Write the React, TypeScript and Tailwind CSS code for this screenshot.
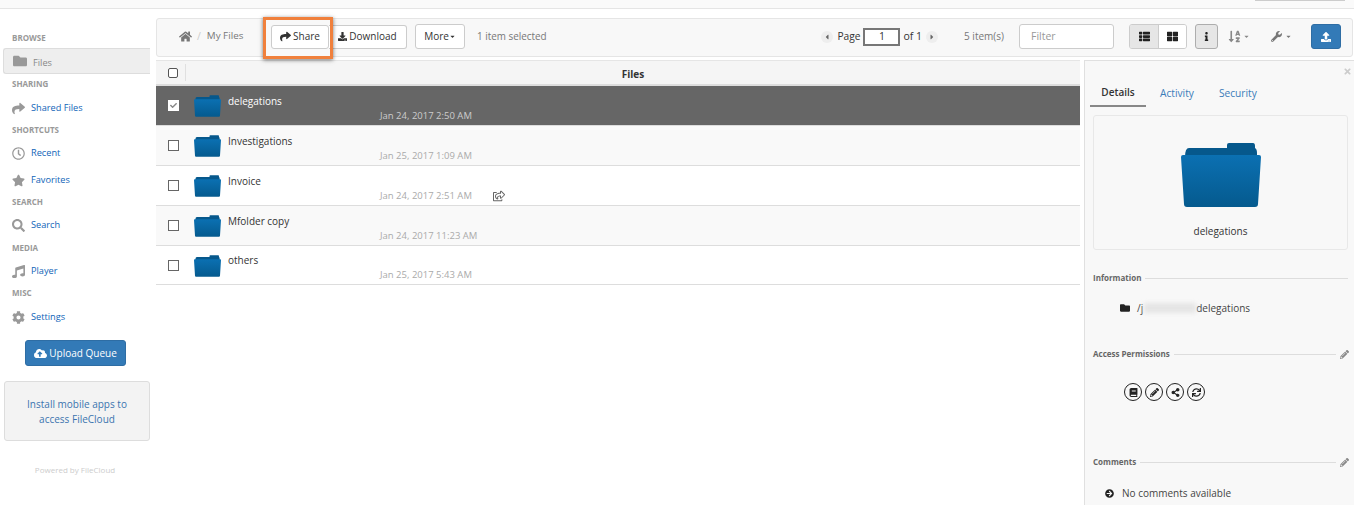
import React from "react";
import { FaHome, FaFolder, FaShare, FaRegClock, FaStar, FaSearch, FaMusic, FaCog, FaCloudUploadAlt, FaDownload, FaCaretDown, FaCaretLeft, FaCaretRight, FaThList, FaThLarge, FaInfo, FaSortAlphaDown, FaWrench, FaUpload, FaPencilAlt, FaShareAlt, FaSync, FaBook, FaCheck, FaTimes, FaRegShareSquare, FaArrowCircleRight } from "react-icons/fa";

function Folder({ className, id }: { className: string; id: string }) {
  return (
    <svg viewBox="0 0 80 64" className={className}>
      <defs>
        <linearGradient id={id} x1="0" y1="0" x2="0" y2="1">
          <stop offset="0" stopColor="#0b70b2" />
          <stop offset="1" stopColor="#055a8e" />
        </linearGradient>
      </defs>
      <path d="M4 14 Q4 5 8 5 H46 V2 Q46 0 48 0 H72 Q74 0 74 3 V5 Q76 6 76 10 V16 H4Z" fill="#06588c" />
      <path d="M0 14 Q0 12 2 12 H78 Q80 12 80 14 L77 61 Q77 64 74 64 H6 Q3 64 3 61Z" fill={`url(#${id})`} />
    </svg>
  );
}

function Label({ children, className = "" }: { children: React.ReactNode; className?: string }) {
  return <div className={`pl-3 text-[8px] leading-[10px] font-bold text-[#999] ${className}`}>{children}</div>;
}

function NavItem({ icon, label, className = "" }: { icon: React.ReactNode; label: string; className?: string }) {
  return (
    <div className={`flex items-center h-[26px] pl-3 ${className}`}>
      <span className="w-[19px] text-[13px] text-[#999] flex">{icon}</span>
      <span className="text-[9.2px] text-[#0f64b8]">{label}</span>
    </div>
  );
}

function Row({ name, date, odd, selected, last, shared }: { name: string; date: string; odd?: boolean; selected?: boolean; last?: boolean; shared?: boolean }) {
  const bg = selected ? "bg-[#666666]" : odd ? "bg-[#f9f9f9]" : "bg-white";
  return (
    <div className={`flex ${last ? "h-[39px]" : "h-[40px]"} ${bg} border-b border-[#dddddd] relative`}>
      <div className="w-[30px] flex justify-center items-center pl-[5px]">
        <span className={`w-[11px] h-[11px] border border-[#666] flex items-center justify-center ${selected ? "bg-white border-white" : "bg-white"}`}>
          {selected && <FaCheck className="text-[7px] text-[#888]" />}
        </span>
      </div>
      <div className="w-[8px]" />
      <Folder id={`f-${name.replace(/\s/g, "")}`} className="w-[27px] h-[22px] mt-[9px]" />
      <div className="ml-[7px] flex-1 flex flex-col">
        <div className={`text-[10px] leading-[14px] ${last ? "mt-[7px]" : "mt-[8px]"} ${selected ? "text-white" : "text-[#333]"}`}>{name}</div>
        <div className="flex items-center ml-[152px] mt-[1px]">
          <span className={`text-[9.5px] leading-[14px] ${selected ? "text-[#ccc]" : "text-[#aaa]"}`}>{date}</span>
          {shared && <FaRegShareSquare className="ml-[21px] text-[12px] text-[#666]" />}
        </div>
      </div>
    </div>
  );
}

function Heading({ label, edit, className = "" }: { label: string; edit?: boolean; className?: string }) {
  return (
    <div className={`flex items-center h-[12px] ${className}`}>
      <span className="text-[8px] font-bold text-[#666]">{label}</span>
      <span className="flex-1 h-px bg-[#ddd] ml-[4px]" />
      {edit ? <FaPencilAlt className="text-[9px] text-[#888] ml-[4px]" /> : null}
    </div>
  );
}

function Perm({ icon }: { icon: React.ReactNode }) {
  return <span className="w-[18px] h-[18px] rounded-full border-[1.5px] border-[#222] flex items-center justify-center text-[9px] text-[#222]">{icon}</span>;
}

export default function App() {
  return (
    <div className="w-[1354px] h-[505px] overflow-hidden bg-white font-['Open_Sans',sans-serif] flex flex-col">
      <div className="h-[9px] shrink-0 bg-[#fafafa] border-b border-[#e5e5e5] flex justify-end">
        <div className="w-[90px] h-px bg-[#ccc] mr-[9px]" />
      </div>
      <div className="flex flex-1 min-h-0">
        <aside className="w-[156px] shrink-0 pt-[24px] pr-[6px]">
          <Label>BROWSE</Label>
          <div className="ml-[3px] mt-[5px] h-[26px] flex items-center pl-[9px] bg-[#eeeeee] border border-r-0 border-[#dddddd] rounded-l-[3px]">
            <FaFolder className="text-[14px] text-[#999] mr-[6px]" />
            <span className="text-[9.2px] text-[#888] pt-[3px]">Files</span>
          </div>
          <Label className="mt-[5px]">SHARING</Label>
          <NavItem icon={<FaShare />} label="Shared Files" className="mt-[6px]" />
          <Label className="mt-[4px]">SHORTCUTS</Label>
          <NavItem icon={<FaRegClock />} label="Recent" className="mt-[5px]" />
          <NavItem icon={<FaStar />} label="Favorites" className="mt-[1px]" />
          <Label className="mt-[4px]">SEARCH</Label>
          <NavItem icon={<FaSearch />} label="Search" className="mt-[5px]" />
          <Label className="mt-[5px]">MEDIA</Label>
          <NavItem icon={<FaMusic />} label="Player" className="mt-[5px]" />
          <Label className="mt-[4px]">MISC</Label>
          <NavItem icon={<FaCog />} label="Settings" className="mt-[6px]" />
          <div className="flex justify-center mt-[10px]">
            <button className="ml-[1px] w-[101px] h-[26px] rounded-[3px] bg-[#337ab7] border border-[#2e6da4] text-white text-[10px] flex items-center justify-center gap-[2px]">
              <FaCloudUploadAlt className="text-[13px]" />
              Upload Queue
            </button>
          </div>
          <div className="ml-[4px] mt-[15px] h-[60px] pt-[2px] bg-[#f3f3f3] border border-[#dddddd] rounded-[3px] flex items-center justify-center text-center text-[10px] leading-[15px] text-[#3b73af] px-4">
            Install mobile apps to access FileCloud
          </div>
          <div className="mt-[24px] text-center text-[8px] leading-[10px] text-[#ccc]">Powered by FileCloud</div>
        </aside>
        <main className="flex-1 min-w-0 pt-[9px] flex flex-col">
          <div className="h-[39px] shrink-0 mr-[1px] pb-[2px] bg-[#f8f8f8] border border-[#e5e5e5] rounded-[3px] flex items-center">
            <div className="w-[114px] shrink-0 flex items-center pl-[22px]">
              <FaHome className="text-[13px] text-[#777]" />
              <span className="ml-[5px] text-[10.5px] text-[#ccc]">/</span>
              <span className="ml-[6px] text-[9.8px] text-[#777]">My Files</span>
            </div>
            <button className="relative w-[58px] h-[24px] bg-white border border-[#ccc] rounded-[3px] text-[10px] text-[#333] flex items-center justify-center gap-[2px]">
              <FaShare className="text-[11px]" />
              Share
              <span className="absolute -left-[9px] -top-[9px] w-[70px] h-[42px] border-[3px] border-[#f0803c] shadow-[0_1px_4px_rgba(0,0,0,0.55)]" />
            </button>
            <button className="w-[78px] h-[24px] bg-white border border-[#ccc] border-l-0 rounded-r-[3px] text-[10px] text-[#333] flex items-center justify-center gap-[2px]">
              <FaDownload className="text-[9px]" />
              Download
            </button>
            <button className="ml-[8px] w-[50px] h-[25px] bg-white border border-[#ccc] rounded-[3px] text-[10px] text-[#333] flex items-center justify-center">
              More
              <FaCaretDown className="text-[7px]" />
            </button>
            <span className="ml-[12px] text-[9.9px] text-[#777]">1 item selected</span>
            <span className="flex-1" />
            <span className="w-[12px] h-[12px] rounded-full bg-[#eee] flex items-center justify-center text-[8px] text-[#666]"><FaCaretLeft /></span>
            <span className="ml-[4px] text-[10.2px] text-[#333]">Page</span>
            <span className="ml-[3px] w-[37px] h-[18px] bg-white border-2 border-[#777] flex items-center justify-center text-[10.5px] text-[#333]">1</span>
            <span className="ml-[3px] text-[10.5px] text-[#333]">of 1</span>
            <span className="ml-[4px] w-[12px] h-[12px] rounded-full bg-[#eee] flex items-center justify-center text-[8px] text-[#666]"><FaCaretRight /></span>
            <span className="ml-[26px] text-[10px] text-[#777]">5 item(s)</span>
            <span className="ml-[15px] w-[95px] h-[25px] bg-white border border-[#ccc] rounded-[3px] flex items-center pl-[11px] text-[10.5px] text-[#999]">Filter</span>
            <div className="ml-[15px] flex h-[25px] w-[58px] border border-[#ccc] rounded-[3px] overflow-hidden">
              <span className="w-[29px] bg-[#e6e6e6] border-r border-[#ccc] flex items-center justify-center text-[11px] text-[#222]"><FaThList /></span>
              <span className="flex-1 bg-white flex items-center justify-center text-[11px] text-[#222]"><FaThLarge /></span>
            </div>
            <span className="ml-[8px] w-[23px] h-[25px] bg-[#e6e6e6] border border-[#adadad] rounded-[3px] flex items-center justify-center text-[9px] text-[#222]"><FaInfo /></span>
            <span className="ml-[10px] w-[22px] flex items-center text-[#888] text-[13px]"><FaSortAlphaDown /><FaCaretDown className="text-[7px] ml-[2px]" /></span>
            <span className="ml-[21px] w-[22px] flex items-center text-[#777] text-[11px]"><FaWrench /><FaCaretDown className="text-[7px] ml-[3px]" /></span>
            <span className="ml-[18px] w-[30px] h-[25px] bg-[#337ab7] border border-[#2e6da4] rounded-[3px] flex items-center justify-center text-[10px] text-white"><FaUpload /></span>
            <span className="w-[11px]" />
          </div>
          <div className="flex flex-1 mt-[3px] min-h-0">
            <section className="w-[924px] shrink-0">
              <div className="flex h-[26px] bg-[#f5f5f5] border-t border-[#e5e5e5] border-b-2 border-b-[#dddddd]">
                <div className="w-[30px] border-r border-[#e0e0e0] my-[3px] pl-[4px] flex items-center justify-center">
                  <span className="w-[10px] h-[10px] bg-white border border-[#555] rounded-[2px]" />
                </div>
                <div className="flex-1 text-center text-[10px] font-bold text-[#333] leading-[26px]">Files</div>
              </div>
              <Row name="delegations" date="Jan 24, 2017 2:50 AM" selected />
              <Row name="Investigations" date="Jan 25, 2017 1:09 AM" odd />
              <Row name="Invoice" date="Jan 24, 2017 2:51 AM" shared />
              <Row name="Mfolder copy" date="Jan 24, 2017 11:23 AM" odd />
              <Row name="others" date="Jan 25, 2017 5:43 AM" last />
            </section>
            <section className="ml-[4px] flex-1 min-w-0 bg-[#f8f8f8] border-l border-t border-[#e0e0e0] px-[8px] relative">
              <FaTimes className="absolute right-[2px] top-[6px] text-[9px] text-[#ccc]" />
              <div className="flex -ml-[3px] h-[47px] pt-[19px] items-start">
                <div className="w-[56px] h-[27px] border-b-2 border-[#888] text-center text-[10px] font-semibold text-[#333] leading-[25px]">Details</div>
                <div className="ml-[14px] text-[10.2px] text-[#3b7cb8] leading-[26px]">Activity</div>
                <div className="ml-[25px] text-[10.2px] text-[#3b7cb8] leading-[26px]">Security</div>
              </div>
              <div className="mt-[7px] -mr-[2px] h-[135px] border border-[#e8e8e8] rounded-[3px] flex flex-col items-center">
                <Folder id="big" className="w-[80px] h-[64px] mt-[27px]" />
                <div className="mt-[17px] text-[10px] text-[#333]">delegations</div>
              </div>
              <Heading label="Information" className="mt-[22px] -mr-[2px]" />
              <div className="flex items-center mt-[17px] ml-[27px] text-[10px] text-[#444] h-[14px]">
                <FaFolder className="text-[10px] text-[#222] mr-[7px]" />
                <span>/j</span>
                <span className="w-[52px] h-[10px] bg-[#e5e5e5] blur-[2px] ml-[1px]" />
                <span>delegations</span>
              </div>
              <Heading label="Access Permissions" edit className="mt-[33px] -mr-[3px]" />
              <div className="flex gap-[3px] mt-[23px] ml-[31px]">
                <Perm icon={<FaBook />} />
                <Perm icon={<FaPencilAlt />} />
                <Perm icon={<FaShareAlt />} />
                <Perm icon={<FaSync />} />
              </div>
              <Heading label="Comments" edit className="mt-[55px] -mr-[3px]" />
              <div className="flex items-center mt-[18px] ml-[12px] text-[10px] text-[#444]">
                <FaArrowCircleRight className="text-[9px] text-[#222] mr-[8px]" />
                No comments available
              </div>
            </section>
          </div>
        </main>
      </div>
    </div>
  );
}
